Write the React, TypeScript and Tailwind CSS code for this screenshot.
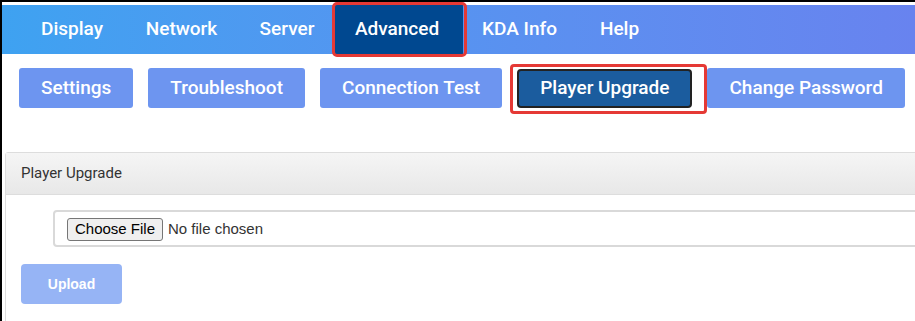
export default function App() {
  const nav: [string, string][] = [
    ["Display", "w-[104px]"],
    ["Network", "w-[115px]"],
    ["Server", "w-[96px]"],
    ["Advanced", "w-[128px]"],
    ["KDA Info", "w-[113px]"],
    ["Help", "w-[87px]"],
  ];
  const subs = ["Settings", "Troubleshoot", "Connection Test", "Player Upgrade", "Change Password"];
  return (
    <div className="w-[915px] h-[321px] overflow-hidden bg-white border-l-2 border-t-2 border-black font-['Roboto',sans-serif]">
      <div className="h-[3px]" />
      <nav className="h-[49px] flex items-stretch pl-[18px] bg-linear-to-r from-[#3ea2f1] to-[#6883ef]">
        {nav.map(([n, w]) =>
          n === "Advanced" ? (
            <div key={n} className={`relative flex items-center justify-center pr-[4px] bg-[#004890] text-white text-[19px] font-medium ${w}`}>
              {n}
              <div className="absolute -left-[3px] -right-[4px] -top-[3px] -bottom-[3px] rounded-[5px] border-[3px] border-[#e53935]" />
            </div>
          ) : (
            <div key={n} className={`flex items-center justify-center text-white text-[19px] font-medium ${w}`}>
              {n}
            </div>
          )
        )}
      </nav>
      <div className="mt-[14px] flex items-center pl-[17px] gap-[15px]">
        {subs.map((s) =>
          s === "Player Upgrade" ? (
            <div key={s} className="relative h-[39px] flex items-center px-[21px] rounded-[4px] bg-[#1b5c9e] border-2 border-[#222] text-white text-[19px] font-medium">
              {s}
              <div className="absolute -left-[9px] -right-[17px] -top-[7px] -bottom-[8px] rounded-[4px] border-[3px] border-[#e53935]" />
            </div>
          ) : (
            <div key={s} className="h-[40px] flex items-center px-[22px] rounded-[3px] bg-[#6d95f0] text-white text-[19px] font-medium">
              {s}
            </div>
          )
        )}
      </div>
      <div className="mt-[44px] ml-[3px] w-[1000px] h-[200px] border border-[#dddddd] rounded-[3px]">
        <div className="h-[42px] flex items-center pl-[15px] bg-linear-to-b from-[#f5f5f5] to-[#e8e8e8] border-b border-[#dddddd] text-[15px] text-[#333]">
          Player Upgrade
        </div>
        <div className="mt-[15px] ml-[47px] h-[37px] border-2 border-[#d9d9d9] rounded-[4px] flex items-center pl-[12px] font-['Liberation_Sans',Arial,sans-serif]">
          <div className="mt-[2px] h-[23px] w-[96px] flex items-center justify-center bg-[#efefef] border border-[#767676] rounded-[3px] text-[15px] text-black">
            Choose File
          </div>
          <span className="ml-[5px] mt-[2px] text-[15px] text-[#333]">No file chosen</span>
        </div>
        <div className="mt-[17px] ml-[15px] w-[101px] h-[40px] rounded-[4px] bg-[#96b4f5] flex items-center justify-center text-white text-[14px] font-bold font-['Liberation_Sans',Arial,sans-serif]">
          Upload
        </div>
      </div>
    </div>
  );
}
